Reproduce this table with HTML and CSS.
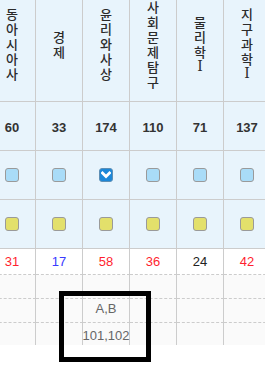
FILE: index.html
```html
<!DOCTYPE html>
<html lang="ko">
<head>
<meta charset="utf-8">
<link rel="stylesheet" href="styles.css">
</head>
<body>
<div class="page">
  <div class="sheet">
    <div class="cell head"><span class="vt">동아시아사</span></div>
    <div class="cell head"><span class="vt">경제</span></div>
    <div class="cell head"><span class="vt">윤리와사상</span></div>
    <div class="cell head"><span class="vt">사회문제탐구</span></div>
    <div class="cell head"><span class="vt">물리학<span class="roman">Ⅰ</span></span></div>
    <div class="cell head"><span class="vt">지구과학<span class="roman">Ⅰ</span></span></div>

    <div class="cell total">60</div>
    <div class="cell total">33</div>
    <div class="cell total">174</div>
    <div class="cell total">110</div>
    <div class="cell total">71</div>
    <div class="cell total">137</div>

    <div class="cell pick"><span class="box blue"></span></div>
    <div class="cell pick"><span class="box blue"></span></div>
    <div class="cell pick"><span class="box checked"><svg width="10" height="8" viewBox="0 0 10 8"><polyline points="1.5,2 5,5.5 8.5,2" fill="none" stroke="#fff" stroke-width="2.8" stroke-linecap="square"/></svg></span></div>
    <div class="cell pick"><span class="box blue"></span></div>
    <div class="cell pick"><span class="box blue"></span></div>
    <div class="cell pick"><span class="box blue"></span></div>

    <div class="cell pick"><span class="box yellow"></span></div>
    <div class="cell pick"><span class="box yellow"></span></div>
    <div class="cell pick"><span class="box yellow"></span></div>
    <div class="cell pick"><span class="box yellow"></span></div>
    <div class="cell pick"><span class="box yellow"></span></div>
    <div class="cell pick"><span class="box yellow"></span></div>

    <div class="cell count red">31</div>
    <div class="cell count blue-t">17</div>
    <div class="cell count red">58</div>
    <div class="cell count red">36</div>
    <div class="cell count dark">24</div>
    <div class="cell count red">42</div>

    <div class="cell info"></div>
    <div class="cell info"></div>
    <div class="cell info"></div>
    <div class="cell info"></div>
    <div class="cell info"></div>
    <div class="cell info"></div>

    <div class="cell info mid"></div>
    <div class="cell info mid"></div>
    <div class="cell info mid">A,B</div>
    <div class="cell info mid"></div>
    <div class="cell info mid"></div>
    <div class="cell info mid"></div>

    <div class="cell info end"></div>
    <div class="cell info end"></div>
    <div class="cell info end">101,102</div>
    <div class="cell info end"></div>
    <div class="cell info end"></div>
    <div class="cell info end"></div>
  </div>
  <div class="mark"></div>
</div>
</body>
</html>
```

FILE: styles.css
```css
html, body {
  margin: 0;
  padding: 0;
  background: #fff;
}
body {
  width: 265px;
  height: 365px;
  overflow: hidden;
  font-family: "Liberation Sans", Arial, "Noto Sans CJK KR", sans-serif;
  font-size: 13px;
  color: #333;
}
.page {
  position: relative;
  width: 265px;
  height: 365px;
  overflow: hidden;
}
.sheet {
  display: grid;
  grid-template-columns: repeat(6, 47px);
  grid-template-rows: 102px 49px 49px 49px 26px 24px 24px 22px;
  margin-left: -11px;
  width: 282px;
}
.cell {
  box-sizing: border-box;
  border-right: 1px solid #cccccc;
  display: flex;
  align-items: center;
  justify-content: center;
  text-align: center;
}
.head {
  background: #e8f4fc;
  border-bottom: 1px solid #cccccc;
  padding-bottom: 14px;
  overflow: visible;
}
.vt {
  display: block;
  width: 14px;
  line-height: 15px;
  font-family: "Noto Sans CJK KR", "Liberation Sans", sans-serif;
  font-size: 13px;
  font-weight: 500;
  color: #2b2b2b;
  word-break: break-all;
  text-align: center;
}
.roman {
  display: block;
  font-family: "DejaVu Serif", "Liberation Serif", serif;
  font-size: 14px;
  line-height: 15px;
  font-weight: normal;
}
.total {
  background: #e8f4fc;
  border-bottom: 1px solid #cccccc;
  font-weight: bold;
  color: #333;
  padding-top: 2px;
}
.pick {
  background: #e8f4fc;
  border-bottom: 1px solid #cccccc;
}
.box {
  box-sizing: border-box;
  width: 14px;
  height: 14px;
  border: 1px solid #9a9a9a;
  border-radius: 3px;
  display: flex;
  align-items: center;
  justify-content: center;
}
.box.blue { background: #a9dcf8; }
.box.yellow { background: #e3e06b; }
.box.checked {
  background: #1c87d8;
  border-color: #5e8fb5;
}
.count {
  background: #fff;
  border-bottom: 1px dashed #cccccc;
}
.red { color: #ff1f2f; }
.blue-t { color: #3a3aff; }
.dark { color: #222; }
.info {
  background: #fafafa;
  border-bottom: 1px dashed #cccccc;
  color: #666;
}
.info.mid {
  padding-bottom: 5px;
}
.info.end {
  border-bottom: none;
  padding-top: 3px;
}
.mark {
  position: absolute;
  left: 59px;
  top: 291px;
  width: 92px;
  height: 71px;
  box-sizing: border-box;
  border: 5px solid #000;
}
```
